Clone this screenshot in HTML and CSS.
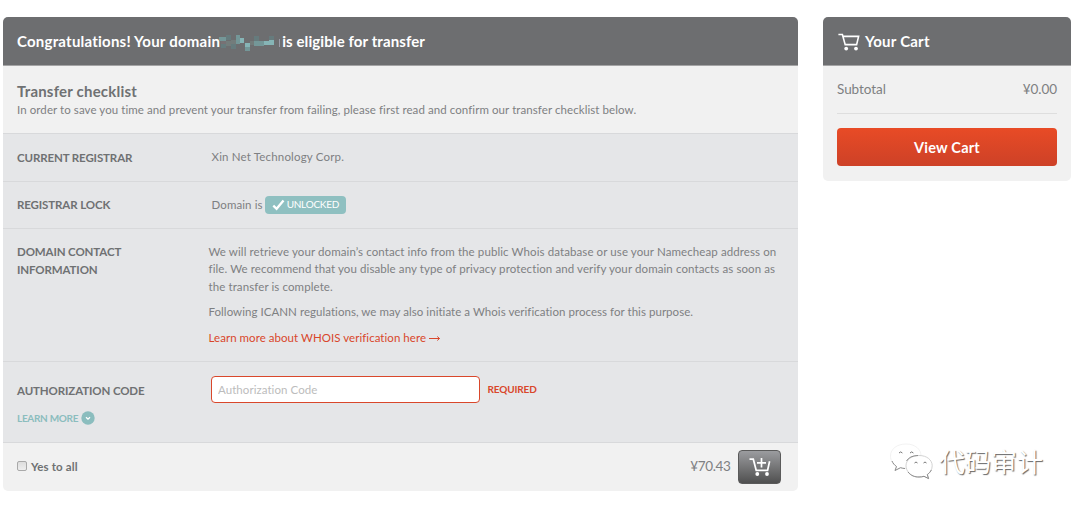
FILE: index.html
```html
<!DOCTYPE html>
<html lang="en">
<head>
<meta charset="utf-8">
<title>Domain Transfer</title>
<link rel="stylesheet" href="styles.css">
</head>
<body>
<div class="page">
  <main class="card transfer">
    <header class="card-head"><span class="head-start">Congratulations! Your domain</span><svg class="mosaic" width="62" height="18" viewBox="0 0 62 18" shape-rendering="crispEdges"><path fill="#777174" d="M2 5h5v5H2z"/><path fill="#667b7d" d="M7 1h5v5H7zM12 10h5v5h-5zM35 2h5v5h-5zM50 2h5v4h-5zM2 10h5v4H2z"/><path fill="#749798" d="M0 3h7v4H0zM17 1h4v9h-4zM35 7h5v5h-5zM40 7h5v5h-5zM26 13h5v4h-5z"/><path fill="#86b5b6" d="M21 4h4v5h-4zM26 9h5v4h-5zM45 7h5v4h-5zM50 6h5v5h-5z"/><path fill="#737c7b" d="M12 6h5v4h-5zM7 7h5v5H7zM31 7h4v4h-4z"/><path fill="#9c9ca8" d="M60 5h1v8h-1z"/></svg><span class="head-end">is eligible for transfer</span></header>
    <section class="intro">
      <h2>Transfer checklist</h2>
      <p>In order to save you time and prevent your transfer from failing, please first read and confirm our transfer checklist below.</p>
    </section>
    <section class="row registrar"><h3>CURRENT REGISTRAR</h3><div class="value">Xin Net Technology Corp.</div></section>
    <section class="row lock"><h3>REGISTRAR LOCK</h3><div class="value">Domain is<span class="badge"><svg width="13" height="12" viewBox="0 0 13 12"><path d="M1.300 6.600 4.600 9.800 11.500 1.600" fill="none" stroke="#fff" stroke-width="2.3"/></svg>UNLOCKED</span></div></section>
    <section class="row contact"><h3>DOMAIN CONTACT<br>INFORMATION</h3><div class="value">
      <p>We will retrieve your domain’s contact info from the public Whois database or use your Namecheap address on<br>file. We recommend that you disable any type of privacy protection and verify your domain contacts as soon as<br>the transfer is complete.</p>
      <p class="note">Following ICANN regulations, we may also initiate a Whois verification process for this purpose.</p>
      <p class="note"><a class="link">Learn more about WHOIS verification here <svg width="12" height="7" viewBox="0 0 12 7"><path d="M0 3.500h10.500M8.300 1.500 10.500 3.500 8.300 5.500" fill="none" stroke="#d9472b"/></svg></a></p>
    </div></section>
    <section class="row auth">
      <div class="auth-label"><h3>AUTHORIZATION CODE</h3><a class="more">LEARN MORE<svg width="14" height="14" viewBox="0 0 14 14"><circle cx="7" cy="7" r="6.7" fill="#8bbdbe"/><path d="M5 6.200 7 8.200 9 6.200" fill="none" stroke="#fff" stroke-width="1.3"/></svg></a></div>
      <div class="field"><input class="code" type="text" placeholder="Authorization Code"><strong>REQUIRED</strong></div>
    </section>
    <footer class="foot"><label class="all"><i class="check"></i>Yes to all</label><div class="buy"><span class="price">¥70.43</span><button class="add"><svg width="22" height="20" viewBox="0 0 22 20" fill="none" stroke="#fff" stroke-width="1.7"><path d="M.5 2.200H4.300L7.200 13.300H18.600L20.600 4.200M12.500 1v9.500M8 5.800h9"/><g fill="#fff" stroke="none"><circle cx="8.300" cy="17" r="1.900"/><circle cx="18" cy="17" r="1.900"/></g></svg></button></div></footer>
  </main>
  <aside class="card cart">
    <header class="card-head"><svg class="cart-icon" width="22" height="18" viewBox="0 0 22 18" fill="none" stroke="#fff" stroke-width="1.6"><path d="M.4 1.500H4.400L7.200 11.600H18.600L20.600 3.400H5.200"/><g fill="#fff" stroke="none"><circle cx="8.200" cy="15.600" r="1.900"/><circle cx="18" cy="15.600" r="1.900"/></g></svg>Your Cart</header>
    <div class="cart-body"><div class="subtotal"><span>Subtotal</span><span>¥0.00</span></div><button class="view">View Cart</button></div>
  </aside>
</div>
<div class="watermark"><svg width="44" height="38" viewBox="0 0 44 38"><g fill="#fff"><path stroke="#ececec" stroke-width=".7" d="M17 2C8 2 1.500 7 1.500 14c0 4.500 2.300 8 6 10.500L6 28.500l5.500-2.800c2 .6 3.600.8 5.500.8 9 0 15-5.500 15-12.500S26 2 17 2z"/><path stroke="#c8c8c8" stroke-width=".8" d="M30 13.500c-8 0-13 4.700-13 10.300S22 35 30 35c1.800 0 3.400-.2 5-.7l4.600 2.300-1.300-4c3-2.200 4.900-5.300 4.900-8.800C43.200 18 38 13.500 30 13.500z"/></g><path d="M3 19c1 2.400 2.400 4 4.500 5.500L6 28.500l5.500-2.800c1.600.5 3 .7 4.500.8M17.500 19c2-3.500 6-5.400 11.500-5.500M19 30c3 3.800 7 5.200 11 5 1.800 0 3.400-.2 5-.7l4.600 2.300-1.300-4c2-1.500 3.300-3 4-4.600" fill="none" stroke="#8c8c8c"/><path d="M10 11q1.700-2.200 3.400 0M21 11q1.700-2.200 3.400 0M25.500 21q1.500-2 3 0M34.500 21q1.500-2 3 0" fill="none" stroke="#777"/></svg><span>代码审计</span></div>
</body>
</html>
```
FILE: styles.css
```css
* { box-sizing: border-box; }
body { margin: 0; background: #fff; color: #7e8082; font: 11.5px/17.5px Lato, "Noto Sans", sans-serif; }
h2, h3, p { margin: 0; }
h2, h3 { color: #6f7173; font-weight: 700; }
button { border: 0; padding: 0; font: inherit; }
svg { flex: none; }

.page { display: flex; align-items: flex-start; gap: 25px; padding: 17px 9px 0 3px; }
.card { background: #f1f1f1; border-radius: 5px; overflow: hidden; }
.transfer { width: 795px; height: 474px; }
.cart { width: 248px; height: 164px; }

.card-head { display: flex; align-items: center; height: 49px; padding: 2px 14px 0; background: #6d6e70; border-bottom: 1px solid #a4a4a5; color: #fff; font-size: 15px; font-weight: 700; letter-spacing: .22px; white-space: pre; }
.head-end { margin-left: 1px; letter-spacing: .1px; }
.mosaic { margin: 1px 0 0 -1px; }
.cart-icon { margin: 0 5px 0 1px; }

.intro { height: 67px; padding: 16px 14px 0; white-space: nowrap; }
.intro h2 { font-size: 15px; line-height: 19px; letter-spacing: .2px; }
.intro p { letter-spacing: .078px; }

.row { display: flex; background: #e5e6e8; border-top: 1px solid #d8d9db; height: 47px; padding: 14px 14px 0; white-space: nowrap; }
.row h3 { width: 194px; font-size: 11.5px; line-height: 17.5px; letter-spacing: -.12px; }
.registrar { height: 48px; padding-top: 14px; }
.registrar h3 { padding-top: 1px; }
.registrar .value { padding-left: .5px; letter-spacing: .17px; }
.lock .value { display: flex; align-items: center; height: 18px; gap: 2px; padding-left: .5px; letter-spacing: .1px; }
.badge { display: inline-flex; align-items: center; gap: 2px; width: 81px; height: 18px; padding-left: 7px; background: #8fc0c1; border-radius: 4px; color: #fff; font-size: 10px; letter-spacing: -.25px; }

.contact { height: 133px; }
.contact .value { margin: -.5px 0 0 -2.5px; letter-spacing: .1px; }
.contact .note { margin-top: 8px; letter-spacing: .044px; }
.link { color: #d9472b; }

.auth { height: 81px; }
.auth h3 { margin: 6px 0 10px; }
.more { display: flex; align-items: center; gap: 3px; color: #8bbdbe; font-size: 10px; font-weight: 700; letter-spacing: -.3px; }
.field { display: flex; align-items: flex-start; gap: 7.5px; }
.code { width: 269px; height: 27px; padding: 0 6px; background: #fff; border: 1px solid #d9472b; border-radius: 4px; font: inherit; letter-spacing: .06px; }
.code::placeholder { color: #bcbcbc; opacity: 1; }
strong { color: #d9472b; font-size: 10px; line-height: 27px; letter-spacing: -.15px; }

.foot { display: flex; justify-content: space-between; height: 49px; padding: 7px 17px 0 14px; border-top: 1px solid #d8d9db; }
.all { display: flex; align-items: center; gap: 4px; height: 34px; color: #6f7173; font-weight: 700; letter-spacing: .15px; }
.check { width: 10px; height: 10px; margin-top: -3px; border: 1px solid #a9a9a9; border-radius: 2px; background: linear-gradient(#ddd, #eee); }
.buy { display: flex; align-items: center; gap: 7.5px; height: 34px; }
.price { font-size: 13.5px; letter-spacing: -.35px; }
.add { display: flex; align-items: center; justify-content: center; width: 43px; height: 34px; background: linear-gradient(#9b9c9f, #505050); border: 1px solid #5a5a5a; border-radius: 4px; }

.cart-body { padding: 14px 14px 0; }
.subtotal { display: flex; justify-content: space-between; height: 34px; border-bottom: 1px solid #dedede; font-size: 13.5px; line-height: 19px; letter-spacing: -.06px; }
.view { display: block; width: 220px; height: 38px; margin-top: 14px; padding-top: 2px; background: linear-gradient(#e84b26, #cd4127); border-radius: 4px; color: #fff; font-size: 14.5px; font-weight: 700; letter-spacing: .2px; }

.watermark { position: absolute; left: 889px; top: 442px; display: flex; align-items: center; gap: 6px; color: #fff; font: 26px/38px "Noto Sans CJK SC", sans-serif; text-shadow: 1px 1px 1px #666; }
```
